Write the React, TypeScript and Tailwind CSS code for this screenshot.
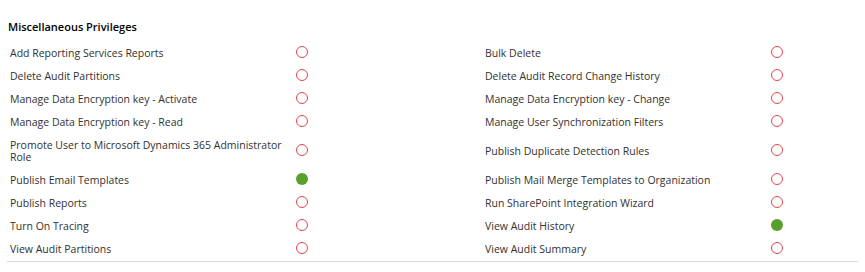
import React from "react";

type Priv = [string, boolean];

const rows: [Priv, Priv][] = [
  [["Add Reporting Services Reports", false], ["Bulk Delete", false]],
  [["Delete Audit Partitions", false], ["Delete Audit Record Change History", false]],
  [["Manage Data Encryption key - Activate", false], ["Manage Data Encryption key - Change", false]],
  [["Manage Data Encryption key - Read", false], ["Manage User Synchronization Filters", false]],
  [
    ["Promote User to Microsoft Dynamics 365 Administrator Role", false],
    ["Publish Duplicate Detection Rules", false],
  ],
  [["Publish Email Templates", true], ["Publish Mail Merge Templates to Organization", false]],
  [["Publish Reports", false], ["Run SharePoint Integration Wizard", false]],
  [["Turn On Tracing", false], ["View Audit History", true]],
  [["View Audit Partitions", false], ["View Audit Summary", false]],
];

const Level = ({ on }: { on: boolean }) =>
  on ? (
    <div className="w-[12px] h-[12px] rounded-full bg-[#57a02c]" />
  ) : (
    <div className="w-[12px] h-[12px] rounded-full border-[1.5px] border-[#e0474c]" />
  );

const Cell = ({ label, on }: { label: string; on: boolean }) => (
  <>
    <div className="pl-[3px] py-[5.25px] leading-[12.5px] flex items-center">{label}</div>
    <div className="pl-[9px] flex items-center">
      <div className="-mt-[3px]">
        <Level on={on} />
      </div>
    </div>
  </>
);

export default function App() {
  return (
    <div
      className="w-[865px] h-[272px] bg-white text-[#323130] text-[10.5px] overflow-hidden"
      style={{ fontFamily: '"Open Sans", "Noto Sans", sans-serif' }}
    >
      <div className="px-[7px] pt-[19px]">
        <h2 className="pl-[1px] text-[11px] font-semibold text-black leading-[16px]">
          Miscellaneous Privileges
        </h2>
        <div className="mt-[6.5px] grid grid-cols-[280px_195px_280px_195px] border-b border-[#dcdcdc]">
          {rows.map(([a, b]) => (
            <React.Fragment key={a[0]}>
              <Cell label={a[0]} on={a[1]} />
              <Cell label={b[0]} on={b[1]} />
            </React.Fragment>
          ))}
        </div>
      </div>
    </div>
  );
}
